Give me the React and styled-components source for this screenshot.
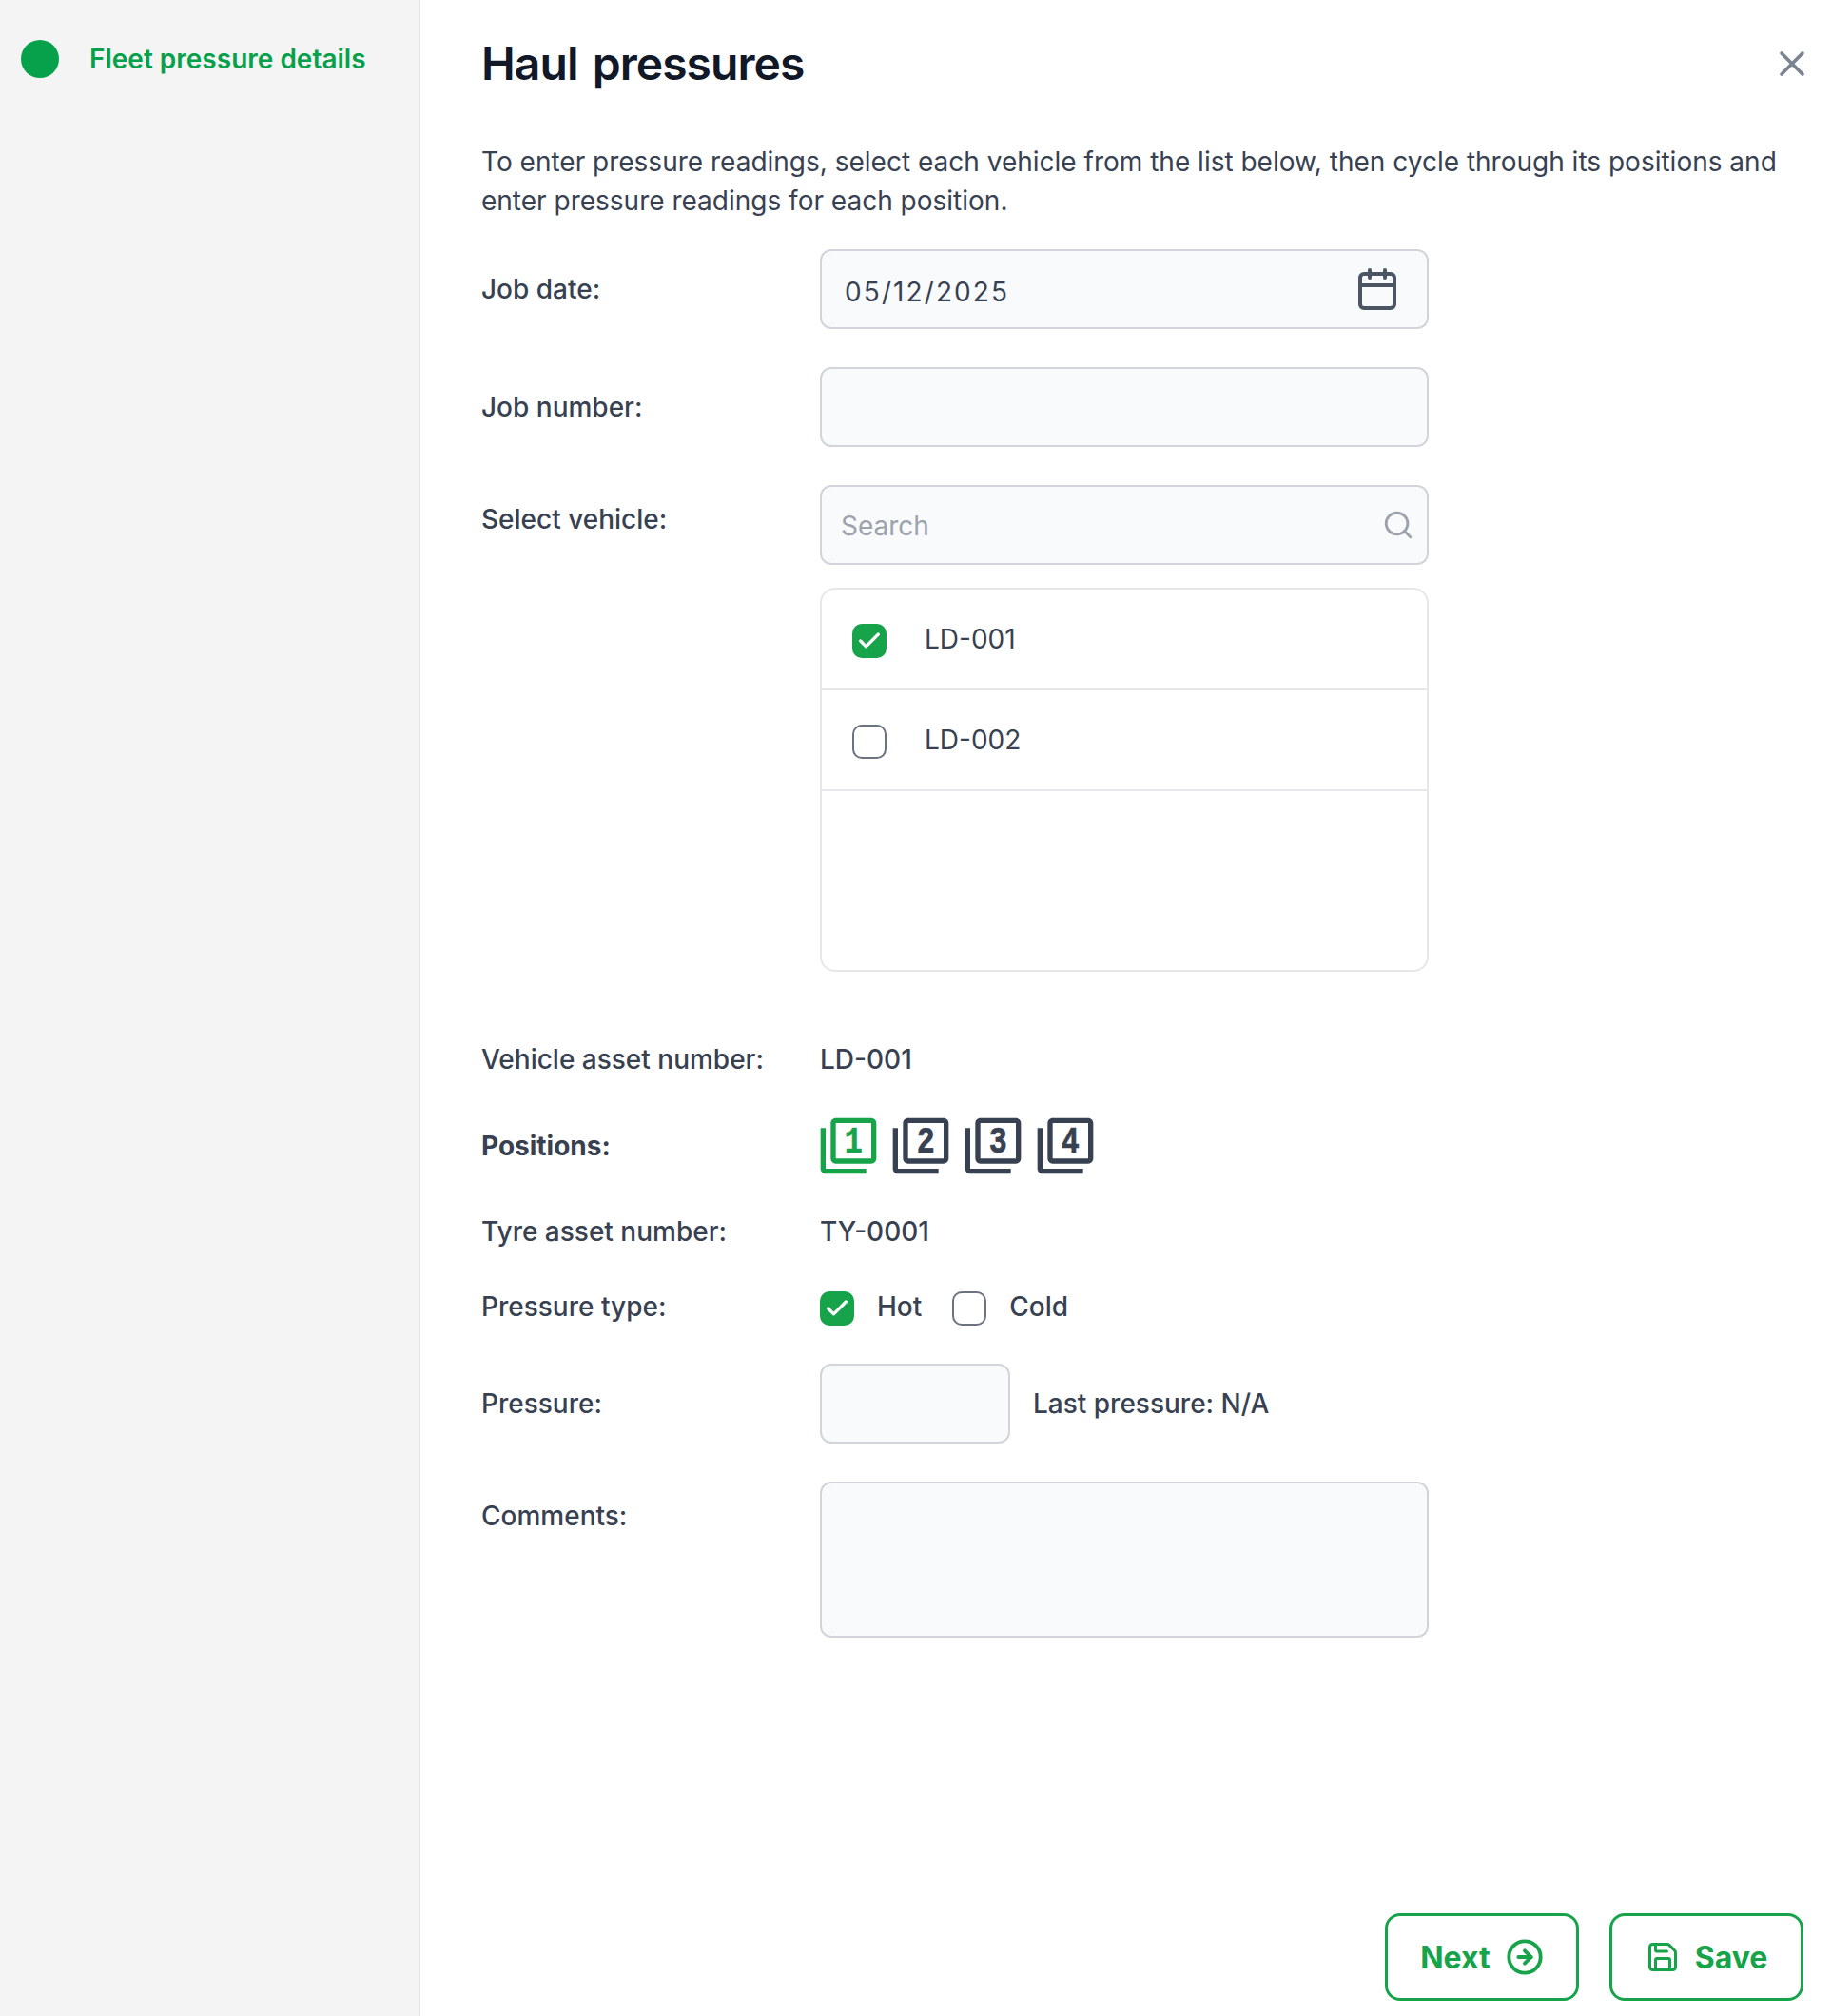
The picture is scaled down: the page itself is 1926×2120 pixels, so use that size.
import React from 'react'
import styled, { createGlobalStyle } from 'styled-components'
import { Calendar, CircleArrowRight, Check, Save, Search, X } from 'lucide-react'

const GlobalStyle = createGlobalStyle`
    html, body { margin: 0; padding: 0; background: #fff; }
    body { font-family: Inter, "Liberation Sans", sans-serif; color: #374151; }
    * { box-sizing: border-box; }
`

const Page = styled.div`
    display: flex;
    height: 2120px;
    overflow: hidden;
`

const Sidebar = styled.aside`
    width: 442px;
    flex: none;
    background: #f4f4f4;
    border-right: 2px solid #e5e5e5;
    padding: 42px 0 0 22px;
`

const Step = styled.div`
    display: flex;
    align-items: center;
    gap: 32px;
    height: 40px;
    color: #06a14a;
    font-size: 28px;
    font-weight: 600;
`

const Dot = styled.span`
    width: 40px;
    height: 40px;
    border-radius: 50%;
    background: #06a14a;
`

const Main = styled.main`
    flex: 1;
    display: flex;
    flex-direction: column;
    padding: 32px 30px 16px 64px;
`

const Header = styled.header`
    display: flex;
    align-items: center;
    justify-content: space-between;
    height: 70px;
`

const Title = styled.h1`
    margin: 0;
    font-size: 48px;
    line-height: 70px;
    font-weight: 600;
    letter-spacing: -0.95px;
    word-spacing: 4px;
    color: #111827;
`

const Close = styled.span`
    display: flex;
    color: #7a8591;
    margin-right: -10px;
`

const Intro = styled.p`
    margin: 48px 0 31px;
    font-size: 28px;
    line-height: 40.5px;
`

const Row = styled.div`
    display: grid;
    grid-template-columns: 356px 640px;
    align-items: ${p => p.$align || 'center'};
    margin-top: ${p => p.$top || 0}px;
`

const Label = styled.label`
    font-size: 28px;
    line-height: 40px;
    font-weight: ${p => (p.$strong ? 700 : 500)};
    padding-top: ${p => p.$pad || 0}px;
`

const Value = styled.span`
    font-size: 28px;
    line-height: 40px;
    font-weight: 500;
`

const Field = styled.div`
    display: flex;
    align-items: center;
    justify-content: space-between;
    width: ${p => p.$width || 640}px;
    height: ${p => p.$height || 84}px;
    background: #f9fafb;
    border: 2px solid #d1d5db;
    border-radius: 12px;
    padding: 0 ${p => p.$right || 28}px 0 ${p => p.$left || 24}px;
    font-size: 28px;
`

const DateText = styled.span`
    letter-spacing: 2.1px;
    padding-top: 6px;
`

const Placeholder = styled.span`
    color: #9ca3af;
    padding-top: 2px;
`

const List = styled.div`
    grid-column: 2;
    height: 404px;
    border: 2px solid #e5e7eb;
    border-radius: 16px;
    margin-top: 24px;
`

const ListRow = styled.div`
    display: flex;
    align-items: center;
    gap: 40px;
    height: 106px;
    padding-left: 32px;
    border-bottom: 2px solid #e5e7eb;
    font-size: 28px;
`

const Box = styled.span`
    display: flex;
    align-items: center;
    justify-content: center;
    width: 36px;
    height: 36px;
    flex: none;
    margin-top: 4px;
    border-radius: 10px;
    color: #fff;
    background: ${p => (p.$on ? '#16a34a' : '#fff')};
    border: 2px solid ${p => (p.$on ? '#16a34a' : '#6b7280')};
`

const Positions = styled.div`
    display: flex;
    gap: 12px;
    margin-left: -2px;
`

const PositionSvg = styled.svg`
    display: block;
    width: 64px;
    height: 64px;
    color: ${p => (p.$on ? '#16a34a' : '#374151')};
`

const PositionDigit = styled.text`
    font-family: "Liberation Mono", monospace;
    font-size: 14.5px;
    font-weight: 700;
    fill: currentColor;
    stroke: currentColor;
    stroke-width: 0.25px;
    text-anchor: middle;
`

const Options = styled.div`
    display: flex;
    align-items: center;
`

const Option = styled.span`
    display: flex;
    align-items: center;
    gap: 24px;
    margin-right: 32px;
    font-size: 28px;
    line-height: 36px;
    font-weight: 500;
`

const Inline = styled.div`
    display: flex;
    align-items: center;
    gap: 24px;
`

const Footer = styled.footer`
    display: flex;
    justify-content: flex-end;
    gap: 32px;
    margin-top: auto;
`

const Button = styled.button`
    display: flex;
    align-items: center;
    justify-content: center;
    gap: 16px;
    width: 204px;
    height: 92px;
    background: #fff;
    border: 3px solid #16a34a;
    border-radius: 16px;
    color: #16a34a;
    font-family: inherit;
    font-size: 32px;
    font-weight: 700;
    padding: 0;
`

const Tick = () => <Check size={28} strokeWidth={2.8} />

const PositionIcon = ({ n, on }) => (
    <PositionSvg viewBox="0 0 24 24" $on={on}>
        <path
            fill="currentColor"
            d="M3 5H1v16c0 1.1.9 2 2 2h16v-2H3V5zm18-4H7c-1.1 0-2 .9-2 2v14c0 1.1.9 2 2 2h14c1.1 0 2-.9 2-2V3c0-1.1-.9-2-2-2zm0 16H7V3h14v14z"
        />
        <PositionDigit transform="translate(14 14.6) scale(0.82 1)">{n}</PositionDigit>
    </PositionSvg>
)

const App = () => {
    return (
        <Page>
            <GlobalStyle />
            <Sidebar>
                <Step><Dot />Fleet pressure details</Step>
            </Sidebar>
            <Main>
                <Header>
                    <Title>Haul pressures</Title>
                    <Close><X size={44} strokeWidth={2} /></Close>
                </Header>
                <Intro>To enter pressure readings, select each vehicle from the list below, then cycle through its positions and enter pressure readings for each position.</Intro>

                <Row>
                    <Label>Job date:</Label>
                    <Field>
                        <DateText>05/12/2025</DateText>
                        <Calendar size={48} color="#4b5563" strokeWidth={2} />
                    </Field>
                </Row>
                <Row $top={40}>
                    <Label>Job number:</Label>
                    <Field />
                </Row>
                <Row $top={40} $align="start">
                    <Label $pad={16}>Select vehicle:</Label>
                    <Field $left={20} $right={13}>
                        <Placeholder>Search</Placeholder>
                        <Search size={34} color="#9ca3af" strokeWidth={2} />
                    </Field>
                    <List>
                        <ListRow><Box $on><Tick /></Box>LD-001</ListRow>
                        <ListRow><Box />LD-002</ListRow>
                    </List>
                </Row>

                <Row $top={72}>
                    <Label>Vehicle asset number:</Label>
                    <Value>LD-001</Value>
                </Row>
                <Row $top={39}>
                    <Label $strong>Positions:</Label>
                    <Positions>
                        {[1, 2, 3, 4].map(n => (
                            <PositionIcon key={n} n={n} on={n === 1} />
                        ))}
                    </Positions>
                </Row>
                <Row $top={38}>
                    <Label>Tyre asset number:</Label>
                    <Value>TY-0001</Value>
                </Row>
                <Row $top={39}>
                    <Label>Pressure type:</Label>
                    <Options>
                        <Option><Box $on><Tick /></Box>Hot</Option>
                        <Option><Box />Cold</Option>
                    </Options>
                </Row>
                <Row $top={40}>
                    <Label>Pressure:</Label>
                    <Inline>
                        <Field $width={200} />
                        <Value>Last pressure: N/A</Value>
                    </Inline>
                </Row>
                <Row $top={40} $align="start">
                    <Label $pad={16}>Comments:</Label>
                    <Field $height={164} />
                </Row>

                <Footer>
                    <Button>Next <CircleArrowRight size={40} strokeWidth={2.3} /></Button>
                    <Button><Save size={36} strokeWidth={2} /> Save</Button>
                </Footer>
            </Main>
        </Page>
    )
}

export default App
